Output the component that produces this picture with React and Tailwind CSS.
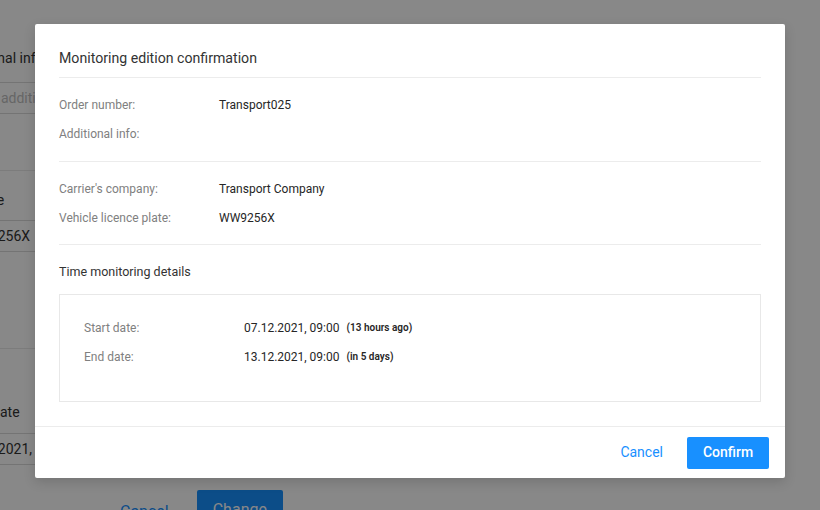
export default function App() {
  return (
    <div className="relative h-[510px] w-[820px] overflow-hidden bg-white font-['Roboto',sans-serif]">
      {/* background page */}
      <div className="ml-[-47px] flex w-[420px] flex-col text-[14px] text-[#333]">
        <div className="mt-[47px] h-[22px] leading-[22px]">Additional info</div>
        <div className="mt-[13px] h-[32px] border border-[#d9d9d9] pl-[11px] leading-[30px] text-[#bfbfbf]">Enter additional info</div>
        <div className="mt-[56px] h-px bg-[#e8e8e8]" />
        <div className="mt-[18px] h-[22px] pl-[3px] leading-[22px]">Licence</div>
        <div className="mt-[9px] h-[32px] border border-[#d9d9d9] pl-[11px] leading-[30px]">WW9256X</div>
        <div className="mt-[96px] h-px bg-[#e8e8e8]" />
        <div className="mt-[52px] h-[22px] pl-[12px] leading-[22px]">End date</div>
        <div className="mt-[10px] h-[32px] border border-[#d9d9d9] pl-[5px] leading-[30px]">07.12.2021, 09:00</div>
        <div className="mt-[25px] flex items-center pl-[167px] text-[16px]">
          <span className="mr-[28px] mt-[4px] text-[#1890ff]">Cancel</span>
          <span className="flex h-[40px] items-center rounded-[2px] bg-[#1890ff] px-[16px] text-white">Change</span>
        </div>
      </div>

      {/* overlay */}
      <div className="absolute inset-0 flex justify-center bg-[rgba(0,0,0,0.467)] pt-6">
        <div className="h-fit w-[750px] rounded-[2px] bg-white shadow-[0_4px_12px_rgba(0,0,0,0.15)]">
          <div className="mx-6 border-b border-[#ececec] pb-[9px] pt-6">
            <div className="h-[20px] text-[14.15px] leading-[20px] text-[#333]">Monitoring edition confirmation</div>
          </div>
          <div className="mx-6 border-b border-[#ececec] pb-[13px] pt-3 text-[12px]">
            <Row label="Order number:" value="Transport025" />
            <Row label="Additional info:" value="" />
          </div>
          <div className="mx-6 border-b border-[#ececec] pb-3 pt-3 text-[12px]">
            <Row label="Carrier's company:" value="Transport Company" />
            <Row label="Vehicle licence plate:" value="WW9256X" />
          </div>
          <div className="mx-6 mb-6 pt-4">
            <div className="mt-px h-[20px] text-[12.5px] leading-[20px] text-[#333]">Time monitoring details</div>
            <div className="mt-[12px] border border-[#e8e8e8] px-6 pb-[30px] pt-[18px] text-[12px]">
              <DateRow label="Start date:" value="07.12.2021, 09:00" note="(13 hours ago)" />
              <DateRow label="End date:" value="13.12.2021, 09:00" note="(in 5 days)" />
            </div>
          </div>
          <div className="flex h-[52px] items-center justify-end border-t border-[#ececec] pr-4 text-[14px]">
            <span className="mr-6 text-[#1890ff]">Cancel</span>
            <span className="flex h-[32px] w-[82px] items-center justify-center rounded-[2px] bg-[#1890ff] font-medium text-white">Confirm</span>
          </div>
        </div>
      </div>
    </div>
  );
}

function Row({ label, value }) {
  return (
    <div className="flex h-[29px] items-center">
      <div className="w-[160px] text-[#808080]">{label}</div>
      <div className="text-[#262626]">{value}</div>
    </div>
  );
}

function DateRow({ label, value, note }) {
  return (
    <div className="flex h-[29px] items-center">
      <div className="w-[160px] text-[#808080]">{label}</div>
      <div className="text-[#262626]">{value}</div>
      <div className="ml-[7px] text-[10px] font-semibold text-[#262626]">{note}</div>
    </div>
  );
}
